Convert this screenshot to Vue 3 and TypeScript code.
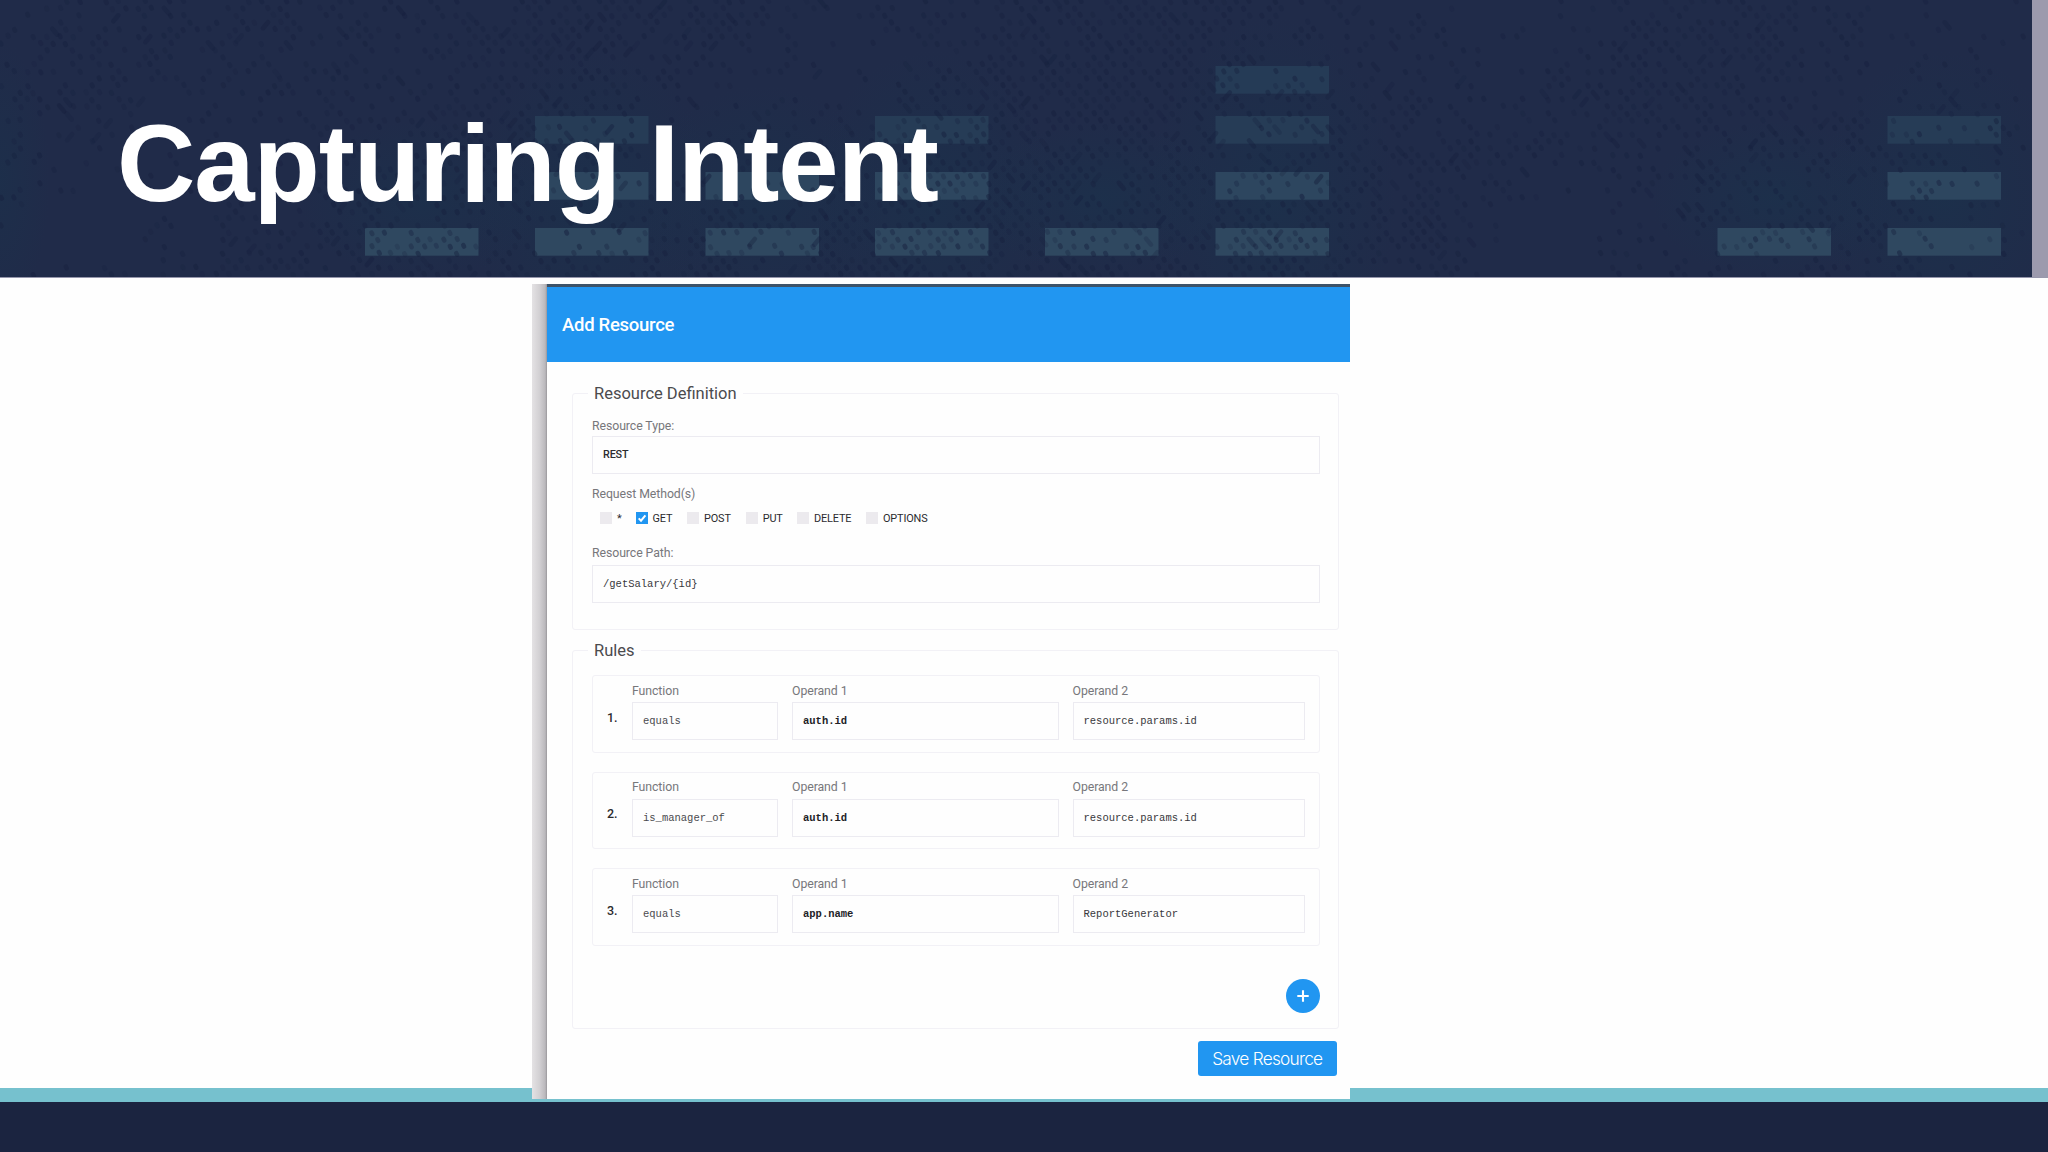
<script setup lang="ts">
interface Rule {
  fn: string
  left: string
  right: string
}

interface Method {
  name: string
  checked: boolean
  width: number
}

interface Speck {
  d: string
  o: number
}

const methods: Method[] = [
  { name: '*', checked: false, width: 35.5 },
  { name: 'GET', checked: true, width: 51.5 },
  { name: 'POST', checked: false, width: 58.7 },
  { name: 'PUT', checked: false, width: 51.3 },
  { name: 'DELETE', checked: false, width: 69 },
  { name: 'OPTIONS', checked: false, width: 70 },
]

const rules: Rule[] = [
  { fn: 'equals', left: 'auth.id', right: 'resource.params.id' },
  { fn: 'is_manager_of', left: 'auth.id', right: 'resource.params.id' },
  { fn: 'equals', left: 'app.name', right: 'ReportGenerator' },
]

// Equalizer columns: left edge and number of lit blocks, counted from the bottom
const columns = [
  { x: 365, lit: 1 },
  { x: 535, lit: 3 },
  { x: 705.5, lit: 2 },
  { x: 875, lit: 3 },
  { x: 1045, lit: 1 },
  { x: 1215.5, lit: 4 },
  { x: 1717.5, lit: 1 },
  { x: 1887.5, lit: 3 },
]
const levels = [
  { y: 228, fill: '#2f4860' },
  { y: 172, fill: '#2d465f' },
  { y: 116, fill: '#263c56' },
  { y: 66, fill: '#253b56' },
]
const blocks = columns.flatMap((c) =>
  levels.slice(0, c.lit).map((l) => ({ x: c.x, y: l.y, fill: l.fill })),
)

// Seeded generator, so that the halftone texture is the same on every load
let seed = 7
function rand(): number {
  seed = (seed * 16807) % 2147483647
  return seed / 2147483647
}

function density(x: number, y: number): number {
  const wave =
    Math.sin(x / 83 + y / 60) * 0.15 + Math.sin(x / 191 - 1.1) * 0.15 + Math.sin(y / 47 + x / 300) * 0.1
  const hub = 0.5 * Math.exp(-(((x - 1130) / 230) ** 2))
  const gap = 0.4 * Math.exp(-(((x - 1540) / 60) ** 2))
  const edge = x > 1870 ? 0.2 : 0
  return 0.36 + wave + hub - gap - edge
}

const specks: Speck[] = []
for (let row = 0; row < 40; row++) {
  for (let col = 0; col < 157; col++) {
    const x = col * 13 + (row % 2) * 6.5 + rand() * 2
    const y = row * 7 + rand() * 1.5
    if (x > 2026 || rand() > density(x, y)) continue
    const long = rand() > 0.92
    const dx = long ? (rand() > 0.5 ? 5 : -5) : 0.8
    specks.push({
      d: `M${x.toFixed(1)} ${y.toFixed(1)}l${dx} ${long ? 6 : 1.5}`,
      o: 0.2 + rand() * 0.32,
    })
  }
}
</script>

<template>
  <div class="slide">
    <header class="banner">
      <svg class="texture" viewBox="0 0 2032 277" width="2032" height="277" aria-hidden="true">
        <defs>
          <radialGradient id="glow">
            <stop offset="0" stop-color="#18354d" stop-opacity=".75" />
            <stop offset="1" stop-color="#18354d" stop-opacity="0" />
          </radialGradient>
        </defs>
        <ellipse v-for="c in columns" :key="c.x" :cx="c.x + 57" cy="200" rx="125" :ry="45 + c.lit * 35" fill="url(#glow)" opacity=".6" />
        <ellipse cx="0" cy="180" rx="50" ry="140" fill="url(#glow)" opacity=".5" />
        <rect v-for="(b, i) in blocks" :key="i" :x="b.x" :y="b.y" width="113.5" height="27.7" :fill="b.fill" />
        <g stroke="#17213f" stroke-width="4.5" stroke-linecap="round">
          <path v-for="(s, i) in specks" :key="i" :d="s.d" :stroke-opacity="s.o" />
        </g>
      </svg>
      <h1 class="title">Capturing Intent</h1>
    </header>

    <main class="stage">
      <div class="capture">
        <div class="shade"></div>
        <section class="sheet">
          <div class="sheet-head">Add Resource</div>
          <div class="sheet-body">
            <div class="group definition">
              <div class="legend">Resource Definition</div>
              <div class="label">Resource Type:</div>
              <div class="field rest">REST</div>
              <div class="label methods-label">Request Method(s)</div>
              <div class="methods">
                <div v-for="m in methods" :key="m.name" class="method" :style="{ width: m.width + 'px' }">
                  <span class="box" :class="{ on: m.checked }">
                    <svg v-if="m.checked" viewBox="0 0 12 12" width="12" height="12">
                      <path d="M2.7 6.4 5 8.7 9.4 3.4" fill="none" stroke="#fff" stroke-width="2" />
                    </svg>
                  </span>
                  <span>{{ m.name }}</span>
                </div>
              </div>
              <div class="label path-label">Resource Path:</div>
              <div class="field path mono dark">/getSalary/{id}</div>
            </div>

            <div class="group rules">
              <div class="legend">Rules</div>
              <div class="rule-list">
                <div v-for="(r, i) in rules" :key="i" class="rule">
                  <div class="num">{{ i + 1 }}.</div>
                  <div class="col fn">
                    <div class="label">Function</div>
                    <div class="field mono">{{ r.fn }}</div>
                  </div>
                  <div class="col left">
                    <div class="label">Operand 1</div>
                    <div class="field mono strong">{{ r.left }}</div>
                  </div>
                  <div class="col right">
                    <div class="label">Operand 2</div>
                    <div class="field mono dark">{{ r.right }}</div>
                  </div>
                </div>
              </div>
              <button class="add" aria-label="Add rule">
                <svg viewBox="0 0 12 12" width="12" height="12">
                  <path d="M6 .3v11.4M.3 6h11.4" stroke="#fff" stroke-width="2.1" />
                </svg>
              </button>
            </div>
            <button class="save">Save Resource</button>
          </div>
        </section>
      </div>
    </main>

    <footer class="base"></footer>
  </div>
</template>

<style>
body {
  margin: 0;
  background: #fefefe;
}
</style>

<style scoped>
* {
  box-sizing: border-box;
}
.slide {
  width: 2048px;
  height: 1152px;
  overflow: hidden;
  display: flex;
  flex-direction: column;
  background: #fefefe;
  font-family: Roboto, "Liberation Sans", sans-serif;
}
.banner {
  position: relative;
  height: 278px;
  flex: none;
  background: #202b49;
  border-right: 16px solid #9c9aad;
  border-bottom: 1px solid #9596ab;
}
.texture {
  position: absolute;
  left: 0;
  top: 0;
}
.title {
  position: relative;
  margin: 0;
  padding: 102px 0 0 117px;
  font: bold 108.5px/124px "Liberation Sans", Arial, sans-serif;
  letter-spacing: -1.05px;
  color: #fff;
  white-space: nowrap;
}
.stage {
  height: 810px;
  flex: none;
  padding: 6px 0 0 532px;
}
.capture {
  position: relative;
  z-index: 1;
  display: flex;
  width: 818px;
  height: 815px;
}
.shade {
  width: 15px;
  background: linear-gradient(90deg, #e4e2e4, #d2d0d3 50%, #bab8bc 88%, #99979b);
}
.sheet {
  width: 803px;
  background: #fefefe;
}
.sheet-head {
  height: 78px;
  padding: 2px 0 0 15px;
  border-top: 3px solid #3c5268;
  background: #2196f1;
  color: #fff;
  font-size: 18.5px;
  font-weight: 500;
  letter-spacing: -0.28px;
  line-height: 72px;
}
.sheet-body {
  display: flex;
  flex-direction: column;
  padding: 31px 11px 0 25px;
}
.group {
  width: 767px;
  border: 1px solid #f2f1f6;
  border-radius: 3px;
  padding: 0 18px 0 19px;
  display: flex;
  flex-direction: column;
}
.definition {
  height: 237px;
}
.rules {
  height: 379px;
  margin-top: 19.5px;
}
.legend {
  align-self: flex-start;
  height: 20px;
  margin: -10px 0 0 -4px;
  padding: 0 6px;
  background: #fefefe;
  color: #4b4b4e;
  font-size: 16.5px;
  line-height: 20px;
  white-space: nowrap;
}
.label {
  height: 16px;
  color: #77777b;
  font-size: 12.3px;
  letter-spacing: -0.08px;
  line-height: 16px;
  white-space: nowrap;
}
.definition .legend + .label {
  margin-top: 14px;
}
.field {
  height: 38px;
  border: 1px solid #ecebf1;
  padding-left: 10px;
  color: #3c3c40;
  line-height: 37px;
  white-space: nowrap;
}
.definition .field {
  margin-top: 2px;
}
.rest {
  font-size: 10.8px;
  font-weight: 500;
  letter-spacing: -0.15px;
  line-height: 36px;
  color: #2b2b2e;
}
.methods-label {
  margin-top: 12px;
}
.methods {
  display: flex;
  margin: 10px 0 0 8px;
  height: 12px;
}
.method {
  display: flex;
  gap: 5px;
  flex: none;
  color: #2b2b2e;
  font-size: 10.9px;
  letter-spacing: -0.15px;
  line-height: 13px;
}
.box {
  width: 12px;
  height: 12px;
  flex: none;
  background: #eceaee;
}
.box svg {
  display: block;
}
.box.on {
  background: #2196f1;
}
.path-label {
  margin-top: 20.5px;
}
.definition .path {
  margin-top: 4px;
}
.mono {
  font-family: "Liberation Mono", "Courier New", monospace;
  font-size: 10.5px;
  color: #4a4a4e;
}
.dark {
  color: #38383c;
}
.strong {
  font-weight: bold;
  color: #222226;
}
.rule-list {
  display: flex;
  flex-direction: column;
  gap: 19px;
  margin-top: 14.5px;
}
.rule {
  display: flex;
  height: 77.5px;
  border: 1px solid #f2f1f6;
  border-radius: 3px;
  padding-top: 6.5px;
}
.num {
  width: 39px;
  padding: 21px 0 0 14px;
  color: #2b2b2e;
  font-size: 12.5px;
  font-weight: 500;
  line-height: 28px;
}
.col .field {
  margin-top: 3.5px;
}
.fn {
  width: 146px;
  margin-right: 14px;
}
.left {
  width: 266.5px;
  margin-right: 14px;
}
.right {
  width: 232px;
}
button {
  border: 0;
  padding: 0;
  background: #2196f1;
  color: #fff;
}
.add {
  align-self: flex-end;
  display: grid;
  place-items: center;
  width: 34.5px;
  height: 34.5px;
  margin-top: 33px;
  border-radius: 50%;
}
.save {
  align-self: flex-end;
  width: 139.5px;
  height: 35.5px;
  margin: 12px 2px 0 0;
  border-radius: 3px;
  font: 300 17.3px/35px Inter, Roboto, sans-serif;
  letter-spacing: -0.75px;
  white-space: nowrap;
}
.base {
  height: 64px;
  flex: none;
  border-top: 14px solid #76c1ce;
  background: #1b2440;
}
</style>
